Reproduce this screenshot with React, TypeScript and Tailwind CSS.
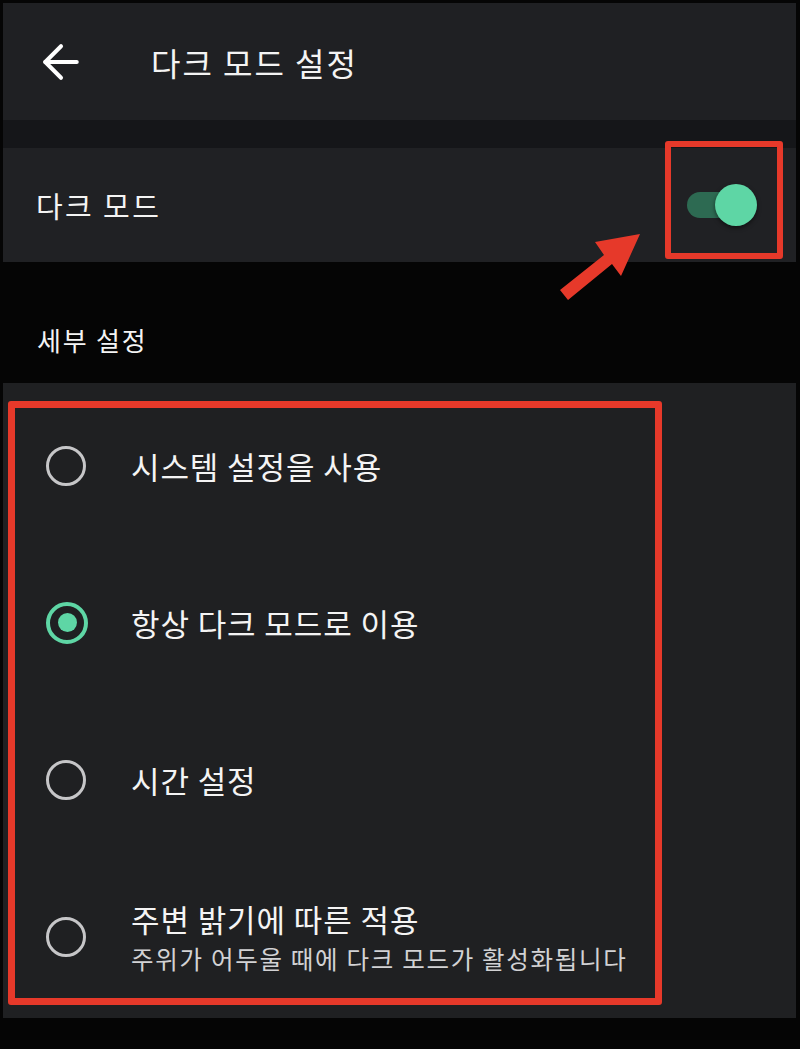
import { ArrowLeft } from "lucide-react";

const font = { fontFamily: '"Noto Sans CJK KR", "Noto Sans", sans-serif' };

type Option = { label: string; sub?: string; selected?: boolean };

const options: Option[] = [
  { label: "시스템 설정을 사용" },
  { label: "항상 다크 모드로 이용", selected: true },
  { label: "시간 설정" },
  { label: "주변 밝기에 따른 적용", sub: "주위가 어두울 때에 다크 모드가 활성화됩니다" },
];

function Radio({ selected }: { selected?: boolean }) {
  if (selected) {
    return (
      <div className="flex h-[42px] w-[42px] items-center justify-center rounded-full border-[4px] border-[#5ed6a5]">
        <div className="h-[19px] w-[19px] rounded-full bg-[#5ed6a5]" />
      </div>
    );
  }
  return <div className="h-[40px] w-[40px] rounded-full border-[3.5px] border-[#c6c6c8]" />;
}

export default function App() {
  return (
    <div
      className="relative flex h-[1049px] w-[800px] flex-col overflow-hidden bg-[#050505] px-[3px] pr-[4px] pt-[3px] text-[#f4f4f4]"
      style={font}
    >
      {/* header */}
      <div className="flex h-[117px] items-center bg-[#1f2023]">
        <ArrowLeft size={54} strokeWidth={1.8} className="ml-[31px] text-white" />
        <span className="ml-[63px] text-[32px] leading-none tracking-[2px]">다크 모드 설정</span>
      </div>
      <div className="h-[28px] bg-[#151619]" />

      {/* dark mode row */}
      <div className="flex h-[114px] items-center justify-between bg-[#202124] pl-[33px] pr-[39px]">
        <span className="text-[29px] leading-none tracking-[2.4px]">다크 모드</span>
        <div className="relative flex h-[42px] w-[70px] items-center">
          <div className="h-[26px] w-[56px] rounded-full bg-[#2d6a52]" />
          <div className="absolute right-0 top-0 h-[42px] w-[42px] rounded-full bg-[#5ed6a5] shadow-[0_2px_4px_rgba(0,0,0,0.5)]" />
        </div>
      </div>

      {/* section label */}
      <div className="h-[121px] pl-[34px] pt-[63px]">
        <span className="text-[26px] leading-[30px] tracking-[1.8px]">세부 설정</span>
      </div>

      {/* options */}
      <div className="flex h-[635px] flex-col bg-[#1f2022] pt-[4px]">
        {options.map((o) => (
          <div key={o.label} className="flex h-[157px] items-center">
            <div className="flex w-[128px] justify-start pl-[43px]">
              <Radio selected={o.selected} />
            </div>
            <div className="flex flex-col">
              <span className="text-[31px] leading-[40px] tracking-[0.9px]">{o.label}</span>
              {o.sub && (
                <span className="mt-[5px] text-[24.5px] leading-[30px] tracking-[1.7px] text-[#d2d2d4]">
                  {o.sub}
                </span>
              )}
            </div>
          </div>
        ))}
      </div>

      {/* annotations */}
      <div className="pointer-events-none absolute left-[665px] top-[141px] h-[118px] w-[118px] rounded-[3px] border-[6px] border-[#e6392a]" />
      <div className="pointer-events-none absolute left-[8px] top-[401px] h-[604px] w-[654px] rounded-[3px] border-[7px] border-[#e6392a]" />
      <svg className="pointer-events-none absolute left-0 top-0" width="800" height="1049">
        <polygon
          points="560,290 604,255 595,242 640,234 621,276 612,264 568,300"
          fill="#e6392a"
        />
      </svg>
    </div>
  );
}
